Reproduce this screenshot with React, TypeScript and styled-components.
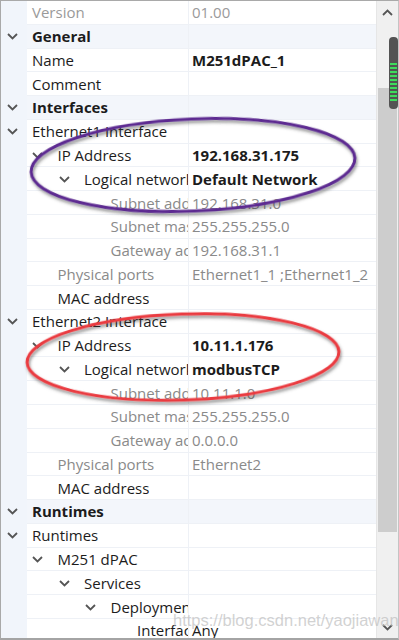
import React from "react";
import styled, { createGlobalStyle } from "styled-components";

type Tone = "normal" | "dim" | "faint";

type Row = {
  name: string;
  value?: string;
  depth: number;
  open?: boolean;
  category?: boolean;
  tone?: Tone;
  valueTone?: Tone;
  bold?: boolean;
};

const rows: Row[] = [
  { name: "Version", value: "01.00", depth: 0, tone: "faint", valueTone: "faint" },
  { name: "General", depth: 0, open: true, category: true },
  { name: "Name", value: "M251dPAC_1", depth: 0, bold: true },
  { name: "Comment", depth: 0 },
  { name: "Interfaces", depth: 0, open: true, category: true },
  { name: "Ethernet1 Interface", depth: 0, open: true },
  { name: "IP Address", value: "192.168.31.175", depth: 1, open: true, bold: true },
  { name: "Logical network", value: "Default Network", depth: 2, open: true, bold: true },
  { name: "Subnet address", value: "192.168.31.0", depth: 3, tone: "dim", valueTone: "dim" },
  { name: "Subnet mask", value: "255.255.255.0", depth: 3, tone: "dim", valueTone: "dim" },
  { name: "Gateway address", value: "192.168.31.1", depth: 3, tone: "dim", valueTone: "dim" },
  { name: "Physical ports", value: "Ethernet1_1 ;Ethernet1_2", depth: 1, tone: "dim", valueTone: "dim" },
  { name: "MAC address", depth: 1 },
  { name: "Ethernet2 Interface", depth: 0, open: true },
  { name: "IP Address", value: "10.11.1.176", depth: 1, open: true, bold: true },
  { name: "Logical network", value: "modbusTCP", depth: 2, open: true, bold: true },
  { name: "Subnet address", value: "10.11.1.0", depth: 3, tone: "dim", valueTone: "dim" },
  { name: "Subnet mask", value: "255.255.255.0", depth: 3, tone: "dim", valueTone: "dim" },
  { name: "Gateway address", value: "0.0.0.0", depth: 3, tone: "dim", valueTone: "dim" },
  { name: "Physical ports", value: "Ethernet2", depth: 1, tone: "dim", valueTone: "dim" },
  { name: "MAC address", depth: 1 },
  { name: "Runtimes", depth: 0, open: true, category: true },
  { name: "Runtimes", depth: 0, open: true },
  { name: "M251 dPAC", depth: 1, open: true },
  { name: "Services", depth: 2, open: true },
  { name: "Deployment", depth: 3, open: true },
  { name: "Interface", value: "Any", depth: 4 },
];

const toneColor = (t?: Tone) =>
  t === "faint" ? "#9a9a9a" : t === "dim" ? "#8a8a8a" : "#1c1c1c";

const Chevron = ({ up }: { up?: boolean }) => (
  <svg width="11" height="7" viewBox="0 0 11 7">
    <path
      d={up ? "M1 6 L5.5 1.5 L10 6" : "M1 1 L5.5 5.5 L10 1"}
      fill="none"
      stroke="#555"
      strokeWidth="1.8"
    />
  </svg>
);

const App = () => {
  return (
    <>
      <GlobalStyle />
      <Frame>
        <Grid>
          {rows.map((r, i) => (
            <GridRow key={i} $category={r.category}>
              <Gutter>{r.depth === 0 && r.open && <Chevron />}</Gutter>
              <NameCell $depth={r.depth}>
                {r.depth > 0 && <ChevronSlot>{r.open && <Chevron />}</ChevronSlot>}
                <NameText $tone={r.tone} $bold={r.category}>
                  {r.name}
                </NameText>
              </NameCell>
              <ValueCell $tone={r.valueTone} $bold={r.bold}>
                {r.value}
              </ValueCell>
            </GridRow>
          ))}
        </Grid>
        <ScrollBar>
          <ArrowButton>
            <Chevron up />
          </ArrowButton>
          <Track>
            <Thumb />
          </Track>
          <ArrowButton>
            <Chevron />
          </ArrowButton>
          <Meter>
            {Array.from({ length: 10 }).map((_, i) => (
              <MeterBar key={i} />
            ))}
          </Meter>
        </ScrollBar>
        <Marks viewBox="0 0 399 640" width="399" height="640">
          <defs>
            <filter id="shade" x="-10%" y="-20%" width="120%" height="140%">
              <feDropShadow dx="1" dy="2.5" stdDeviation="1.4" floodColor="#333" floodOpacity="0.55" />
            </filter>
          </defs>
          <ellipse
            cx="193"
            cy="165"
            rx="162"
            ry="46"
            transform="rotate(-2.5 193 165)"
            fill="none"
            stroke="#5d2b91"
            strokeWidth="3"
            filter="url(#shade)"
          />
          <ellipse
            cx="183"
            cy="357"
            rx="156"
            ry="43"
            transform="rotate(-2 183 357)"
            fill="none"
            stroke="#ea3b41"
            strokeWidth="3"
            filter="url(#shade)"
          />
        </Marks>
        <Watermark>https://blog.csdn.net/yaojiawan</Watermark>
      </Frame>
    </>
  );
};

export default App;

const GlobalStyle = createGlobalStyle`
  html, body {
    margin: 0;
    padding: 0;
    background: #fff;
  }
  body {
    font-family: "Open Sans", "Noto Sans", sans-serif;
  }
`;

const Frame = styled.div`
  position: relative;
  display: flex;
  width: 399px;
  height: 640px;
  box-sizing: border-box;
  border-top: 1px solid #a9a9a9;
  border-left: 1px solid #a9a9a9;
  border-right: 1px solid #c4c4c4;
  border-bottom: 2px solid #a4a4a4;
  overflow: hidden;
  background: #fff;
`;

const Grid = styled.div`
  flex: 1;
  display: flex;
  flex-direction: column;
  overflow: hidden;
`;

const GridRow = styled.div<{ $category?: boolean }>`
  display: flex;
  flex: none;
  height: 23.77px;
  background: ${(p) => (p.$category ? "#f3f6fb" : "#fff")};
  font-size: 15px;
  line-height: 23px;
`;

const Gutter = styled.div`
  width: 26px;
  flex: none;
  display: flex;
  align-items: center;
  padding-left: 6px;
  box-sizing: border-box;
  background: #f1f5fb;
`;

const NameCell = styled.div<{ $depth: number }>`
  width: 162px;
  flex: none;
  display: flex;
  align-items: center;
  box-sizing: border-box;
  padding-left: ${(p) => (p.$depth === 0 ? 5 : (p.$depth - 1) * 26.5 + 4)}px;
  padding-top: 1px;
  border-bottom: 1px solid #eef1f6;
  border-right: 1px solid #eef1f6;
  overflow: hidden;
  white-space: nowrap;
`;

const ChevronSlot = styled.div`
  width: 26.5px;
  flex: none;
  display: flex;
  align-items: center;
  padding-left: 1px;
  box-sizing: border-box;
`;

const NameText = styled.span<{ $tone?: Tone; $bold?: boolean }>`
  color: ${(p) => toneColor(p.$tone)};
  font-weight: ${(p) => (p.$bold ? 700 : 400)};
  white-space: nowrap;
`;

const ValueCell = styled.div<{ $tone?: Tone; $bold?: boolean }>`
  flex: 1;
  display: flex;
  align-items: center;
  padding-left: 3px;
  padding-top: 1px;
  border-bottom: 1px solid #eef1f6;
  color: ${(p) => toneColor(p.$tone)};
  font-weight: ${(p) => (p.$bold ? 700 : 400)};
  white-space: nowrap;
  overflow: hidden;
`;

const ScrollBar = styled.div`
  position: relative;
  width: 21px;
  flex: none;
  display: flex;
  flex-direction: column;
  background: #f0f0f0;
  border-left: 1px solid #e6e6e6;
`;

const ArrowButton = styled.div`
  height: 22px;
  flex: none;
  display: flex;
  align-items: center;
  justify-content: center;
`;

const Track = styled.div`
  flex: 1;
  display: flex;
  flex-direction: column;
  align-items: center;
`;

const Thumb = styled.div`
  margin-top: 65px;
  width: 19px;
  height: 444px;
  background: #cdcdcd;
`;

const Meter = styled.div`
  position: absolute;
  top: 36px;
  right: 0;
  width: 9px;
  height: 72px;
  box-sizing: border-box;
  padding: 26px 1px 4px;
  display: flex;
  flex-direction: column;
  gap: 2px;
  background: #535353;
  border-radius: 4px;
`;

const MeterBar = styled.div`
  height: 2px;
  background: #3ddc5c;
`;

const Marks = styled.svg`
  position: absolute;
  left: -1px;
  top: -1px;
  pointer-events: none;
  overflow: visible;
`;

const Watermark = styled.div`
  position: absolute;
  left: 172px;
  top: 610px;
  font-family: "Liberation Sans", Arial, sans-serif;
  font-size: 16.5px;
  color: rgba(190, 190, 190, 0.7);
  white-space: nowrap;
  pointer-events: none;
`;
